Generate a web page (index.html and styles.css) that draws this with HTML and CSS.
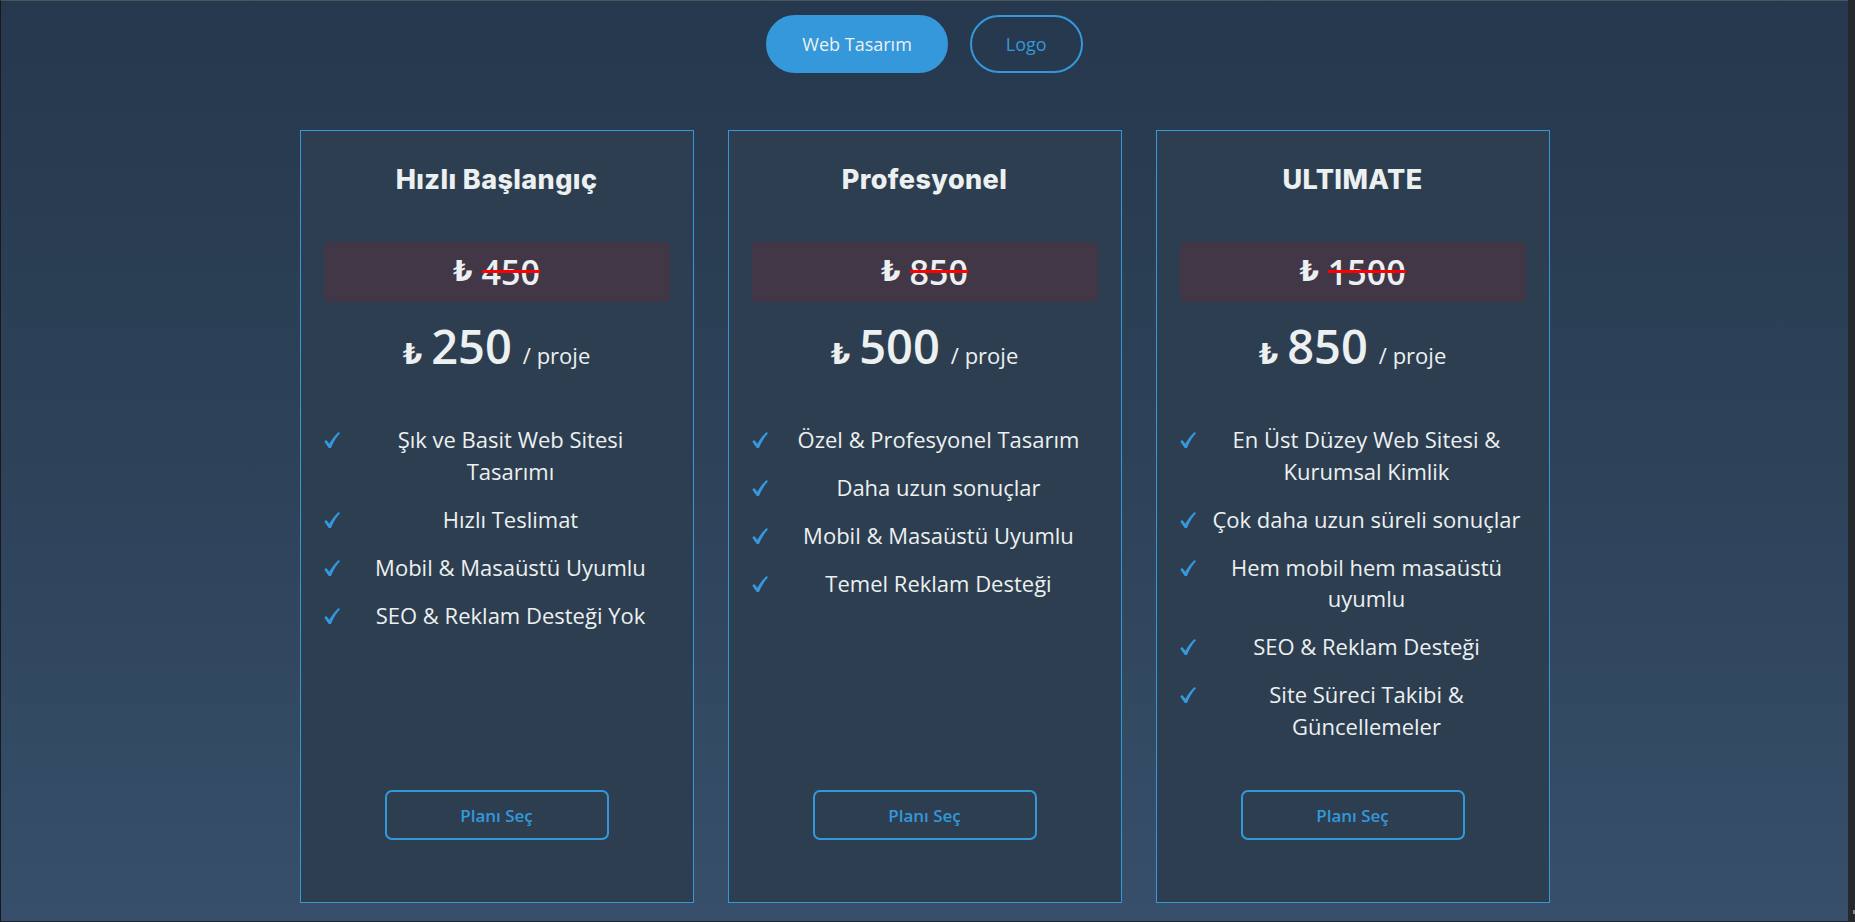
FILE: index.html
```html
<!DOCTYPE html>
<html lang="tr">
<head>
<meta charset="utf-8">
<title>Fiyatlandırma</title>
<link rel="stylesheet" href="styles.css">
</head>
<body>
<svg width="0" height="0" class="defs" aria-hidden="true">
  <symbol id="tick" viewBox="0 0 16 16">
    <path d="M0.2 9.6 L2.3 8 L5.4 11.7 C8 7.2 11.2 3.1 14.6 0 L16 1.3 C12.5 5.2 9.3 10.1 7 16 L4.7 16 Z"/>
  </symbol>
</svg>
<div class="frame">
  <main class="page">
    <nav class="tabs">
      <button class="tab active">Web Tasarım</button>
      <button class="tab">Logo</button>
    </nav>
    <section class="plans">
      <article class="card">
        <h2 class="title">Hızlı Başlangıç</h2>
        <div class="old"><span class="lira">₺</span><span class="strike">450</span></div>
        <div class="price"><span class="lira">₺</span><span class="amount">250</span><span class="per">/ proje</span></div>
        <ul class="features">
          <li><svg class="check"><use href="#tick"/></svg><span class="txt">Şık ve Basit Web Sitesi Tasarımı</span></li>
          <li><svg class="check"><use href="#tick"/></svg><span class="txt">Hızlı Teslimat</span></li>
          <li><svg class="check"><use href="#tick"/></svg><span class="txt">Mobil &amp; Masaüstü Uyumlu</span></li>
          <li><svg class="check"><use href="#tick"/></svg><span class="txt">SEO &amp; Reklam Desteği Yok</span></li>
        </ul>
        <button class="choose">Planı Seç</button>
      </article>
      <article class="card">
        <h2 class="title">Profesyonel</h2>
        <div class="old"><span class="lira">₺</span><span class="strike">850</span></div>
        <div class="price"><span class="lira">₺</span><span class="amount">500</span><span class="per">/ proje</span></div>
        <ul class="features">
          <li><svg class="check"><use href="#tick"/></svg><span class="txt">Özel &amp; Profesyonel Tasarım</span></li>
          <li><svg class="check"><use href="#tick"/></svg><span class="txt">Daha uzun sonuçlar</span></li>
          <li><svg class="check"><use href="#tick"/></svg><span class="txt">Mobil &amp; Masaüstü Uyumlu</span></li>
          <li><svg class="check"><use href="#tick"/></svg><span class="txt">Temel Reklam Desteği</span></li>
        </ul>
        <button class="choose">Planı Seç</button>
      </article>
      <article class="card">
        <h2 class="title">ULTIMATE</h2>
        <div class="old"><span class="lira">₺</span><span class="strike">1500</span></div>
        <div class="price"><span class="lira">₺</span><span class="amount">850</span><span class="per">/ proje</span></div>
        <ul class="features">
          <li><svg class="check"><use href="#tick"/></svg><span class="txt">En Üst Düzey Web Sitesi &amp; Kurumsal Kimlik</span></li>
          <li><svg class="check"><use href="#tick"/></svg><span class="txt">Çok daha uzun süreli sonuçlar</span></li>
          <li><svg class="check"><use href="#tick"/></svg><span class="txt">Hem mobil hem masaüstü uyumlu</span></li>
          <li><svg class="check"><use href="#tick"/></svg><span class="txt">SEO &amp; Reklam Desteği</span></li>
          <li><svg class="check"><use href="#tick"/></svg><span class="txt">Site Süreci Takibi &amp; Güncellemeler</span></li>
        </ul>
        <button class="choose">Planı Seç</button>
      </article>
    </section>
  </main>
  <div class="scrollbar"><span class="thumb"></span></div>
</div>
</body>
</html>
```

FILE: styles.css
```css
* { box-sizing: border-box; }

html, body {
  margin: 0;
  padding: 0;
  height: 100%;
}

body {
  font-family: "Open Sans", "DejaVu Sans", sans-serif;
  color: #ecf0f1;
  background: #1d1f22;
}

.defs {
  position: absolute;
  width: 0;
  height: 0;
}

.frame {
  display: flex;
  height: 922px;
  overflow: hidden;
}

.page {
  flex: 1;
  border-top: 1px solid #4a525c;
  border-left: 1px solid #17191c;
  border-bottom: 1px solid #1f2226;
  background: linear-gradient(180deg, #26384d 0%, #2d4259 50%, #374f6a 100%);
  display: flex;
  flex-direction: column;
  align-items: center;
}

.scrollbar {
  width: 7px;
  background: #25282d;
  display: flex;
  flex-direction: column;
  justify-content: flex-end;
  align-items: flex-end;
  padding-bottom: 8px;
}

.thumb {
  width: 2px;
  height: 4px;
  background: #8a8d92;
}

/* Tabs */
.tabs {
  display: flex;
  gap: 22px;
  margin-top: 14px;
}

.tab {
  height: 58px;
  padding: 0 34px;
  border: 2px solid #3498db;
  border-radius: 29px;
  background: transparent;
  color: #3498db;
  font-family: "Open Sans", sans-serif;
  font-size: 18px;
}

.tab.active {
  background: #3498db;
  color: #ecf0f1;
}

/* Plans */
.plans {
  display: grid;
  grid-template-columns: repeat(3, 394px);
  gap: 34px;
  margin-top: 57px;
}

.card {
  height: 773px;
  border: 1px solid #3498db;
  background: #2c3e50;
  padding: 31px 23px 62px;
  display: flex;
  flex-direction: column;
}

.title {
  margin: 0;
  font-family: "Inter", "DejaVu Sans", sans-serif;
  font-weight: 800;
  font-size: 27px;
  letter-spacing: 0.4px;
  line-height: 36px;
  text-align: center;
  color: #ecf0f1;
}

.old {
  margin-top: 44px;
  height: 60px;
  border-radius: 5px;
  background: rgba(255, 0, 0, 0.1);
  display: flex;
  align-items: center;
  justify-content: center;
  font-size: 34px;
  line-height: 1;
}

.lira {
  font-family: "DejaVu Sans", sans-serif;
  font-weight: 700;
  font-size: 28px;
  line-height: 1;
  margin-right: 9px;
}

.strike {
  position: relative;
  font-weight: 600;
}

.strike::after {
  content: "";
  position: absolute;
  left: 0;
  right: 0;
  top: calc(50% - 2px);
  height: 3px;
  background: #ff0000;
}

.price {
  margin-top: 14px;
  height: 60px;
  font-size: 47px;
  line-height: 60px;
  text-align: center;
  white-space: nowrap;
}

.amount {
  font-weight: 600;
  line-height: 1;
}

.per {
  font-size: 22px;
  line-height: 1;
  margin-left: 11px;
}

.features {
  list-style: none;
  margin: 48px 0 0;
  padding: 0;
  flex: 1;
  display: flex;
  flex-direction: column;
  gap: 16.5px;
}

.features li {
  display: flex;
  align-items: flex-start;
  font-size: 22px;
  line-height: 31.5px;
}

.check {
  flex: 0 0 16px;
  width: 16px;
  height: 16px;
  margin: 8px 12px 0 0;
  fill: #3498db;
}

.txt {
  flex: 1;
  text-align: center;
}

.choose {
  align-self: center;
  width: 224px;
  height: 50px;
  border: 2px solid #3498db;
  border-radius: 7px;
  background: transparent;
  color: #3498db;
  font-family: "Open Sans", sans-serif;
  font-weight: 600;
  font-size: 17px;
}
```
